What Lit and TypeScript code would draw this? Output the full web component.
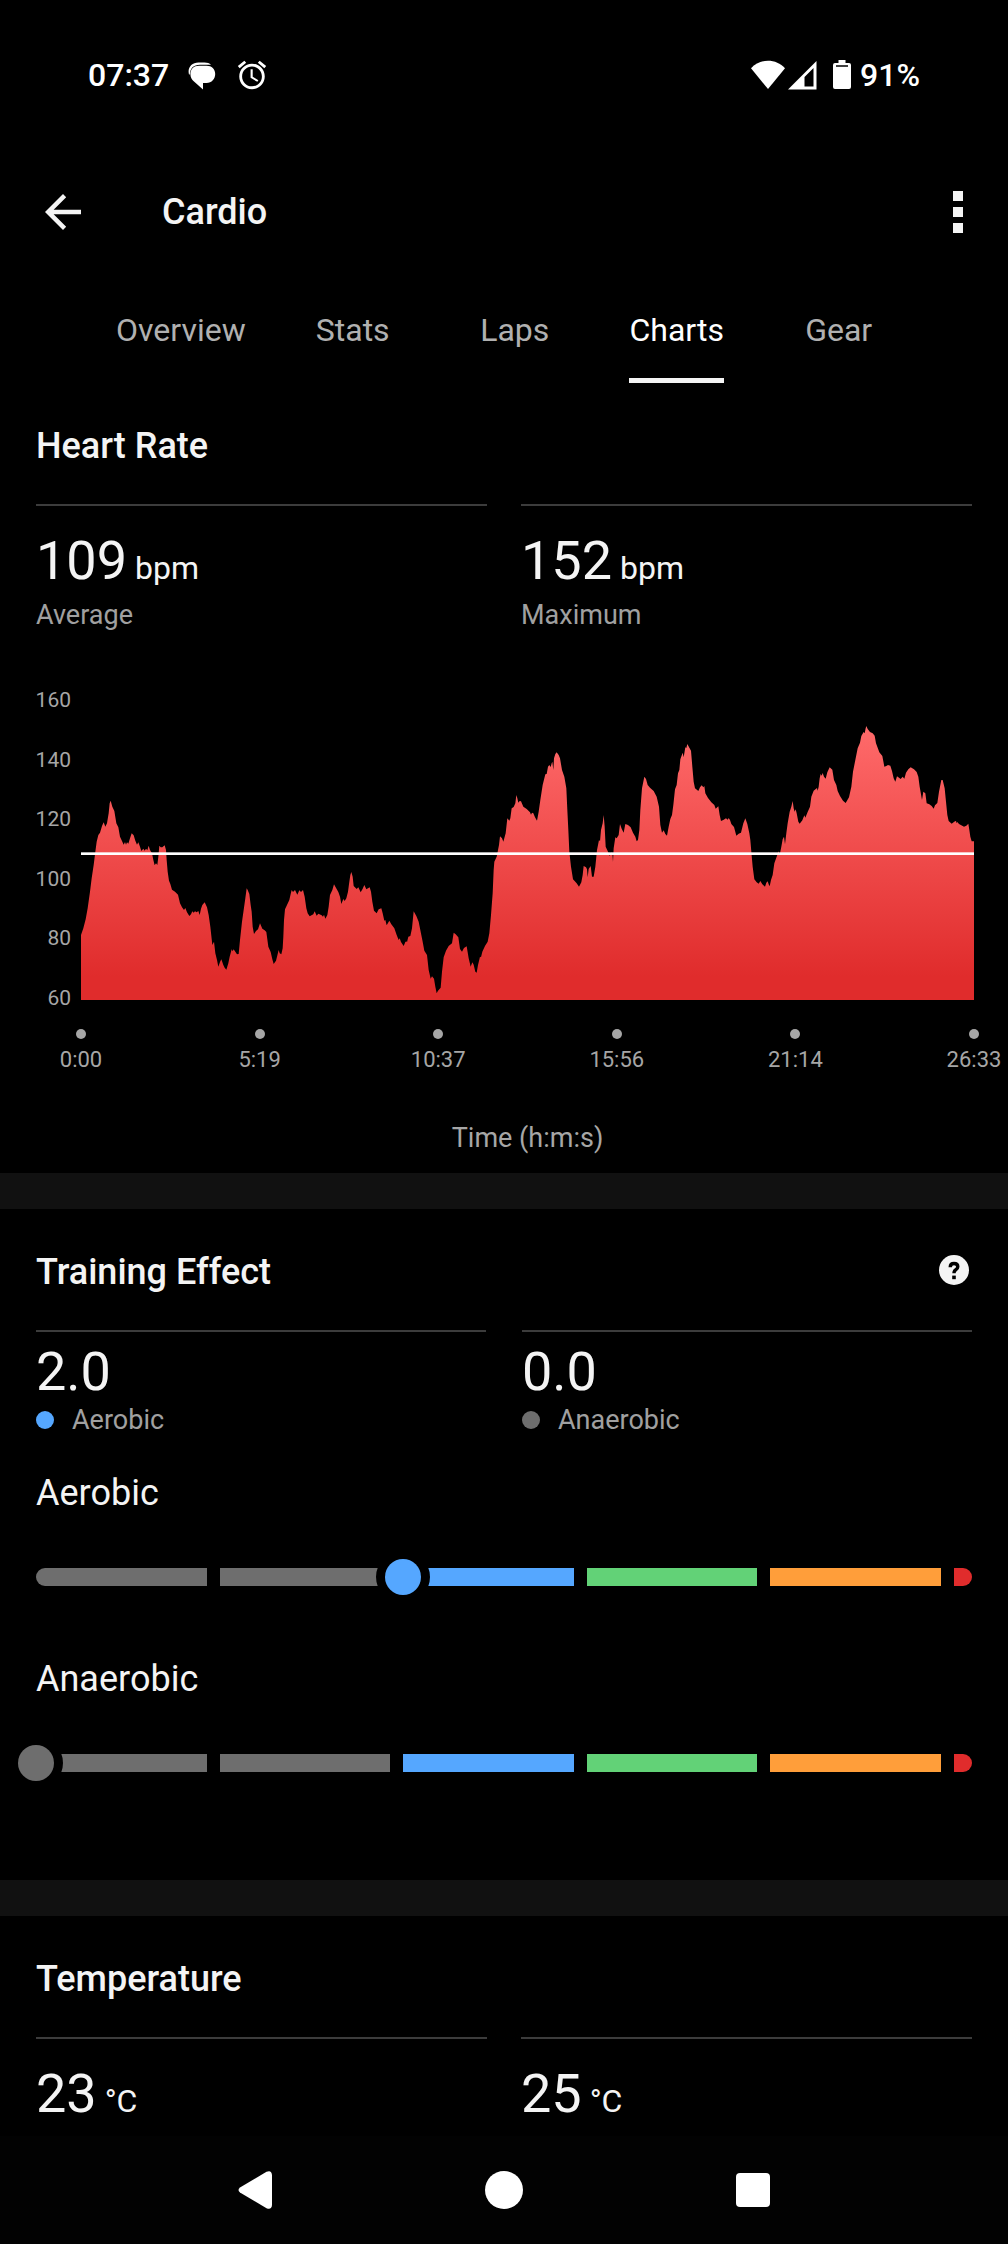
import { LitElement, html, css, svg } from "lit";
import { customElement, property, state } from "lit/decorators.js";

/* Heart-rate trace in chart units (2679 wide, 900 high), split in four stretches.
   Each stretch lists x,y pairs measured from its own left edge. */
const TRACE_WIDTH = 2679;
const TRACE_HEIGHT = 900;
const TRACE_TOP = 90;
const TRACE: { offset: number; points: string }[] = [
  {
    offset: -183,
    points:
      "183,795 190,775 197,748 203,715 210,665 215,625 221,585 226,545 230,515 235,495 240,488 246,468 251,457 256,470 261,460 266,430 269,400 272,392 277,410 283,423 289,460 295,472 300,500 307,515 311,524 315,516 318,524 321,517 325,521 330,505 335,490 341,496 346,512 351,524 355,517 360,530 364,543 370,536 374,542 378,536 382,541 386,527 390,540 396,550 400,570 404,586 408,580 412,585 415,560 418,527 422,532 427,532 434,526 438,540 440,570 443,605 447,632 451,642 456,659 465,665 474,674 480,700 486,712 492,720 496,714 501,727 508,738 513,733 517,724 521,728 525,724 530,727 535,723 539,735 543,716 547,705 554,697 561,712 566,735 571,770 577,825 582,815 586,850 591,870 595,890 600,876 604,868 610,885 614,893 619,899 625,880 629,860 635,838 638,844 641,838 646,845 651,853 656,852 660,810 666,755 671,720 676,685 680,655 683,660 688,672 692,705 695,725 698,770 702,792 708,783 714,778 720,760 727,776 734,781 739,786 745,830 752,846 757,868 761,882 768,872 774,848",
  },
  {
    offset: 567,
    points:
      "26,840 29,850 34,853 38,835 40,800 42,750 45,718 51,705 58,690 62,672 65,660 69,666 75,660 82,674 88,661 93,666 99,660 104,680 109,715 113,730 119,739 130,733 134,724 140,737 145,731 155,736 159,740 162,734 166,746 172,735 176,710 180,675 187,660 192,643 197,652 205,666 210,680 214,702 220,687 224,693 229,685 234,665 238,635 241,615 244,606 248,620 251,648 260,657 265,652 272,667 278,656 283,645 289,658 299,652 303,665 307,695 312,722 320,730 326,718 334,715 338,730 343,752 346,750 350,766 358,752 364,763 373,775 380,795 386,810 389,805 393,816 401,828 406,816 409,814 411,817 415,800 421,798 426,775 431,724 439,738 446,755 452,785 458,815 463,842 471,855 476,900 482,926 486,919 492,926 496,950 500,970 504,962 512,953 516,905 521,862 528,842 536,828 546,820 551,788 557,793 565,802 570,837 576,845 582,834 590,829 596,865 602,890 607,877 611,884 616,905 620,908 624,885 630,860 633,862 637,845 645,828 653,815 658,790 663,735 668,670 671,600 673,575 680,560 683,545 687,525 690,499 696,505 700,515 707,490 712,445 718,452 721,445 725,415 731,411 736,400",
  },
  {
    offset: 1287,
    points:
      "19,375 22,385 25,398 29,393 33,394 40,410 50,417 60,427 63,434 66,428 70,430 75,442 81,452 86,425 91,390 98,345 106,313 110,312 114,290 118,285 122,291 125,280 127,275 130,300 132,265 136,252 140,247 146,255 150,265 156,300 163,320 169,355 172,420 175,480 178,545 183,590 189,628 200,640 207,650 214,637 218,615 221,588 228,592 231,598 233,622 236,597 242,588 246,620 251,620 256,590 261,540 267,510 270,514 273,480 278,460 281,435 284,470 287,530 294,545 299,558 303,548 307,548 309,576 311,535 316,502 320,505 326,495 330,462 335,476 341,488 346,462 354,465 362,472 369,488 376,500 380,514 384,510 388,480 391,420 396,355 403,320 408,327 413,345 420,353 431,363 440,380 447,410 451,465 456,488 461,481 466,492 471,497 476,470 481,447 486,435 490,405 495,358 500,345 504,310 508,300 511,268 518,248 521,262 526,232 529,234 532,222 538,233 543,242 547,290 551,335 555,355 565,363 570,352 575,346 580,352 583,348 586,370 594,384 604,397 613,405 617,416 625,409 629,435 633,453 640,450 648,445 653,449 656,444 660,450 664,462 672,471 679,497 686,491 693,488 700,460 706,445 712,462 718,490",
  },
  {
    offset: 2007,
    points:
      "1,510 4,545 8,590 13,628 20,637 26,641 31,633 37,643 45,650 49,638 53,634 56,643 59,649 63,630 68,615 73,580 80,560 86,544 89,555 94,530 98,508 102,500 105,523 109,490 113,460 119,425 124,410 128,393 131,415 134,425 137,418 140,430 145,455 149,461 157,451 163,436 166,443 172,428 180,410 184,380 191,362 201,354 203,362 206,350 209,325 212,312 215,317 218,309 222,320 227,326 232,307 239,292 247,299 252,330 259,345 263,363 270,378 279,392 287,399 297,382 304,350 309,305 316,270 323,235 330,218 334,198 341,186 344,190 347,175 349,168 353,177 360,186 368,190 374,197 378,220 388,247 397,258 403,290 409,288 414,285 421,287 426,303 431,325 436,335 441,319 452,327 458,320 463,326 468,308 475,298 482,292 492,298 500,306 505,320 509,350 516,390 520,365 526,370 530,400 538,403 545,408 551,416 555,406 562,399 567,365 571,345 574,330 578,330 584,355 588,395 592,435 596,453 605,461 615,454 618,453 620,460 622,456 627,462 642,470 649,467 655,461 658,480 661,500 665,514 672,514",
  },
];

const areaPath = (): string => {
  const points = TRACE.flatMap(({ offset, points }) =>
    points.split(" ").map((pair) => {
      const [x, y] = pair.split(",").map(Number);
      return `${x + offset} ${y - TRACE_TOP}`;
    })
  );
  return `M0 ${TRACE_HEIGHT}L${points.join("L")}V${TRACE_HEIGHT}Z`;
};

const reset = css`
  * {
    box-sizing: border-box;
  }
  button {
    display: flex;
    align-items: center;
    justify-content: center;
    margin: 0;
    padding: 0;
    border: 0;
    background: none;
    color: inherit;
    font: inherit;
  }
  svg {
    display: block;
    flex: none;
  }
  ul,
  ol,
  h1,
  h2,
  p,
  dl,
  dd {
    margin: 0;
    padding: 0;
    list-style: none;
  }
`;

@customElement("status-bar")
class StatusBar extends LitElement {
  static styles = [
    reset,
    css`
      :host {
        display: flex;
        align-items: center;
        justify-content: space-between;
        height: 150px;
        padding: 0 88px;
        color: #fff;
        font: 500 32px/40px "Roboto", sans-serif;
      }
      .group {
        display: flex;
        align-items: center;
      }
      .left,
      .icons {
        gap: 19px;
      }
      .icons {
        display: flex;
      }
      .battery {
        margin: 0 9px 0 16px;
      }
      .wifi {
        margin-right: 3px;
      }
    `,
  ];

  render() {
    return html`
      <div class="group left">
        <time>07:37</time>
        <div class="icons">
          <svg width="28" height="34" viewBox="0 0 28 34" fill="#fff" aria-hidden="true">
            <path d="M1 16.5C-.8 10 3.500 4.500 10.500 4.500H16.500C19.300 4.500 21.500 5.300 23 6.800H12C5.500 6.800 2 10.500 1.800 16.500Z" />
            <path d="M11 7.800H18.500C23.800 7.800 27.200 11.300 27.200 16S23.800 25 18.500 25H15V31.500L6 23.500C3.700 21.800 2.400 19.200 2.400 16C2.400 11.300 5.800 7.800 11 7.800Z" />
          </svg>
          <svg width="34" height="34" viewBox="0 0 24 24" fill="#fff" aria-hidden="true">
            <path d="M22 5.720l-4.600-3.860-1.290 1.530 4.600 3.860L22 5.720zM7.880 3.390L6.600 1.860 2 5.710l1.290 1.530 4.590-3.850zM12.500 8H11v6l4.750 2.850.75-1.230-4-2.370V8zM12 4c-4.970 0-9 4.030-9 9s4.020 9 9 9c4.970 0 9-4.030 9-9s-4.030-9-9-9zm0 16c-3.870 0-7-3.130-7-7s3.130-7 7-7 7 3.130 7 7-3.130 7-7 7z" />
          </svg>
        </div>
      </div>
      <div class="group">
        <svg class="wifi" width="34" height="30" viewBox="0 0 34 30" fill="#fff" aria-hidden="true">
          <path d="M17 29L0 8.300C4.500 3.300 10.500 .7 17 .7S29.500 3.300 34 8.300Z" />
        </svg>
        <svg width="29" height="30" viewBox="0 0 29 30" aria-hidden="true">
          <path fill="#fff" fill-rule="evenodd" d="M28.500 1V29.500H0ZM25.500 8L16.500 17V26.500H25.500Z" />
        </svg>
        <svg class="battery" width="18" height="30" viewBox="0 0 18 30" aria-hidden="true">
          <path fill="#fff" fill-rule="evenodd" d="M5.500 0H12.500V3H16Q18 3 18 5V27Q18 29 16 29H2Q0 29 0 27V5Q0 3 2 3H5.500ZM3 5.200V6.800H15V5.200Z" />
        </svg>
        <span>91%</span>
      </div>
    `;
  }
}

@customElement("app-bar")
class AppBar extends LitElement {
  static styles = [
    reset,
    css`
      :host {
        display: flex;
        align-items: center;
        height: 124px;
        padding: 0 23px 0 36px;
      }
      h1 {
        flex: 1;
        margin-left: 72px;
        font: 500 36px/44px "Roboto", sans-serif;
      }
    `,
  ];

  render() {
    return html`
      <button aria-label="Back">
        <svg width="54" height="54" viewBox="0 0 24 24" fill="currentColor">
          <path d="M20 11H7.830l5.590-5.590L12 4l-8 8 8 8 1.410-1.410L7.830 13H20v-2z" />
        </svg>
      </button>
      <h1>Cardio</h1>
      <button aria-label="More options">
        <svg width="54" height="54" viewBox="0 0 54 54" fill="currentColor">
          <path d="M22 6h10v10H22zM22 22h10v10H22zM22 38h10v10H22z" />
        </svg>
      </button>
    `;
  }
}

@customElement("tab-strip")
class TabStrip extends LitElement {
  @state() private current = "Charts";

  static styles = [
    reset,
    css`
      :host {
        display: block;
        padding-left: 90px;
        font: 400 32px/40px "Roboto", sans-serif;
      }
      .tabs {
        display: flex;
      }
      .tab {
        min-width: 162px;
        padding: 36px 26px 0;
        color: #b0b0b0;
      }
      .name {
        padding-bottom: 28px;
        border-bottom: 5px solid transparent;
      }
      .tab[aria-selected="true"] {
        color: #fff;
      }
      .tab[aria-selected="true"] .name {
        border-color: #f4f4f4;
      }
    `,
  ];

  render() {
    return html`<div class="tabs" role="tablist">
      ${["Overview", "Stats", "Laps", "Charts", "Gear"].map(
        (name) => html`<button
          class="tab"
          role="tab"
          aria-selected=${name === this.current ? "true" : "false"}
          @click=${() => (this.current = name)}
        >
          <span class="name">${name}</span>
        </button>`
      )}
    </div>`;
  }
}

@customElement("heart-chart")
class HeartChart extends LitElement {
  static styles = [
    reset,
    css`
      :host {
        display: grid;
        grid-template-columns: 45px 1fr;
        padding-right: 34px;
        padding-left: 36px;
        color: #a6a6a6;
        font: 400 22px/24px "Roboto", sans-serif;
      }
      .levels {
        display: flex;
        flex-direction: column;
        align-items: flex-end;
        justify-content: space-between;
        margin: -12px 0 -10px;
        padding-right: 10px;
        font-size: 21px;
      }
      .plot {
        width: 100%;
        height: 300px;
      }
      .ticks {
        display: flex;
        grid-column: 2;
        justify-content: space-between;
        padding-top: 29px;
      }
      .tick {
        display: flex;
        flex-direction: column;
        align-items: center;
        gap: 9px;
        width: 0;
        white-space: nowrap;
      }
      .dot {
        width: 10px;
        height: 10px;
        border-radius: 50%;
        background: #a6a6a6;
      }
      .caption {
        grid-column: 2;
        margin-top: 50px;
        font-size: 27px;
        line-height: 32px;
        text-align: center;
      }
    `,
  ];

  render() {
    return html`
      <ul class="levels">
        ${[160, 140, 120, 100, 80, 60].map((level) => html`<li>${level}</li>`)}
      </ul>
      <svg
        class="plot"
        viewBox="0 0 ${TRACE_WIDTH} ${TRACE_HEIGHT}"
        preserveAspectRatio="none"
        role="img"
        aria-label="Heart rate over time"
      >
        ${svg`
          <defs>
            <linearGradient id="heat" gradientUnits="userSpaceOnUse" x1="0" y1="75" x2="0" y2="830">
              <stop offset="0" stop-color="#ff6b6b" />
              <stop offset="1" stop-color="#e02c2c" />
            </linearGradient>
          </defs>
          <path d=${areaPath()} fill="url(#heat)" />
          <rect x="0" y="457" width=${TRACE_WIDTH} height="8" fill="#fff" />
        `}
      </svg>
      <ol class="ticks">
        ${["0:00", "5:19", "10:37", "15:56", "21:14", "26:33"].map(
          (label) => html`<li class="tick"><span class="dot"></span>${label}</li>`
        )}
      </ol>
      <p class="caption">Time (h:m:s)</p>
    `;
  }
}

@customElement("effect-gauge")
class EffectGauge extends LitElement {
  @property() label = "";
  @property({ type: Number }) value = 0;

  static styles = [
    reset,
    css`
      :host {
        display: block;
      }
      .title {
        display: block;
        font: 400 36px/44px "Roboto", sans-serif;
      }
      .scale {
        display: grid;
        align-items: center;
        margin-top: 44px;
      }
      .zones,
      .range {
        grid-area: 1 / 1;
      }
      .zones {
        display: grid;
        grid-template-columns: repeat(5, 1fr) 18px;
        gap: 13px;
        height: 18px;
      }
      .zone {
        background: #6e6e6e;
      }
      .zone:first-child {
        border-radius: 9px 0 0 9px;
      }
      .blue {
        background: #55a7ff;
      }
      .green {
        background: #62d277;
      }
      .orange {
        background: #ff9e3a;
      }
      .red {
        border-radius: 0 9px 9px 0;
        background: #e02c2c;
      }
      .range {
        height: 36px;
        margin: 0 0 0 -18px;
        background: none;
        appearance: none;
      }
      .range::-webkit-slider-thumb {
        width: 36px;
        height: 36px;
        border: 0;
        border-radius: 50%;
        background: #6e6e6e;
        box-shadow: 0 0 0 9px #000;
        appearance: none;
      }
      .active::-webkit-slider-thumb {
        background: #55a7ff;
      }
    `,
  ];

  render() {
    return html`
      <label class="title" for="range">${this.label}</label>
      <div class="scale">
        <div class="zones">
          <span class="zone"></span>
          <span class="zone"></span>
          <span class="zone blue"></span>
          <span class="zone green"></span>
          <span class="zone orange"></span>
          <span class="zone red"></span>
        </div>
        <input
          id="range"
          class="range ${this.value >= 2 ? "active" : ""}"
          type="range"
          min="0"
          max="5"
          step="0.1"
          .value=${String(this.value)}
        />
      </div>
    `;
  }
}

@customElement("nav-bar")
class NavBar extends LitElement {
  static styles = [
    reset,
    css`
      :host {
        display: flex;
        justify-content: center;
        height: 108px;
        background: #020202;
        color: #fff;
      }
      button {
        width: 249px;
      }
    `,
  ];

  render() {
    return html`
      <button aria-label="Back">
        <svg width="38" height="38" viewBox="0 0 38 38" fill="currentColor">
          <path d="M30.500 .8Q35.500-1.300 36 4V34Q35.500 39.300 30.500 37.200L4 21.500Q1 19 4 16.500Z" />
        </svg>
      </button>
      <button aria-label="Home">
        <svg width="38" height="38" viewBox="0 0 38 38" fill="currentColor">
          <circle cx="19" cy="19" r="19" />
        </svg>
      </button>
      <button aria-label="Recent apps">
        <svg width="34" height="34" viewBox="0 0 34 34" fill="currentColor">
          <rect width="34" height="34" rx="4" />
        </svg>
      </button>
    `;
  }
}

@customElement("app-root")
class AppRoot extends LitElement {
  static styles = [
    reset,
    css`
      :host {
        display: flex;
        flex-direction: column;
        min-height: 100vh;
        background: #000;
        color: #f4f4f4;
        font-family: "Roboto", sans-serif;
      }
      main {
        flex: 1;
      }
      section + section {
        border-top: 36px solid #111;
      }
      .heading {
        display: flex;
        justify-content: space-between;
        align-items: flex-start;
        height: 85px;
        padding: 41px 36px 0;
      }
      h2 {
        font-size: 36px;
        font-weight: 500;
        line-height: 44px;
      }
      .help {
        height: 40px;
      }
      .stats {
        display: grid;
        grid-template-columns: 1fr 1fr;
        gap: 34px;
        padding: 36px 36px 0;
      }
      .stat {
        display: flex;
        flex-direction: column;
        gap: 6px;
        padding-top: 23px;
        border-top: 2px solid #3c3c3c;
      }
      .compact {
        gap: 36px;
      }
      .compact .stat {
        gap: 0;
        padding-top: 8px;
      }
      .value {
        font-size: 54px;
        line-height: 64px;
      }
      .unit {
        font-size: 32px;
        line-height: 40px;
      }
      .label {
        display: flex;
        align-items: center;
        gap: 18px;
        color: #a0a0a0;
        font-size: 27px;
        line-height: 32px;
      }
      .key {
        width: 18px;
        height: 18px;
        border-radius: 50%;
        background: #6e6e6e;
      }
      .aerobic {
        background: #55a7ff;
      }
      heart-chart {
        padding-top: 69px;
        padding-bottom: 19px;
      }
      .gauges {
        display: grid;
        gap: 62px;
        padding: 35px 36px 99px;
      }
    `,
  ];

  private measure(value: string, unit: string, label: string) {
    return html`<div class="stat">
      <p class="value">${value}<span class="unit"> ${unit}</span></p>
      ${label ? html`<p class="label">${label}</p>` : ""}
    </div>`;
  }

  render() {
    return html`
      <status-bar></status-bar>
      <app-bar></app-bar>
      <tab-strip></tab-strip>
      <main>
        <section>
          <div class="heading"><h2>Heart Rate</h2></div>
          <div class="stats">
            ${this.measure("109", "bpm", "Average")} ${this.measure("152", "bpm", "Maximum")}
          </div>
          <heart-chart></heart-chart>
        </section>
        <section>
          <div class="heading">
            <h2>Training Effect</h2>
            <button class="help" aria-label="About training effect">
              <svg width="36" height="36" viewBox="0 0 36 36">
                <circle cx="18" cy="18" r="15" fill="#f4f4f4" />
                <path d="M14.200 15.200Q14.300 11.500 18 11.500Q21.800 11.500 21.800 14.700Q21.800 16.500 19.800 17.700Q18 18.800 18 21.300" fill="none" stroke="#000" stroke-width="3.400" />
                <rect x="16.200" y="23.600" width="3.600" height="3.600" />
              </svg>
            </button>
          </div>
          <div class="stats compact">
            <div class="stat">
              <p class="value">2.0</p>
              <p class="label"><span class="key aerobic"></span>Aerobic</p>
            </div>
            <div class="stat">
              <p class="value">0.0</p>
              <p class="label"><span class="key"></span>Anaerobic</p>
            </div>
          </div>
          <div class="gauges">
            <effect-gauge label="Aerobic" .value=${2}></effect-gauge>
            <effect-gauge label="Anaerobic" .value=${0}></effect-gauge>
          </div>
        </section>
        <section>
          <div class="heading"><h2>Temperature</h2></div>
          <div class="stats">${this.measure("23", "°C", "")} ${this.measure("25", "°C", "")}</div>
        </section>
      </main>
      <nav-bar></nav-bar>
    `;
  }
}
